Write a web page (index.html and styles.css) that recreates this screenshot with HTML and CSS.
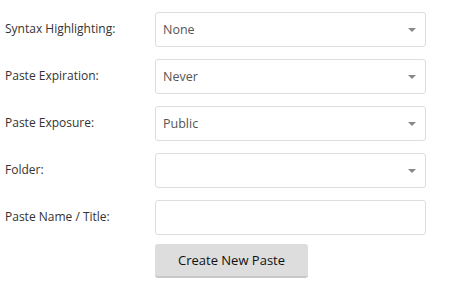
FILE: index.html
```html
<!DOCTYPE html>
<html lang="en">
<head>
    <meta charset="UTF-8">
    <title>New Paste</title>
    <link rel="stylesheet" href="styles.css">
</head>
<body>
    <form class="paste-form">
        <div class="form-row">
            <label class="form-label">Syntax Highlighting:</label>
            <div class="select-box"><span class="select-value">None</span><span class="arrow"></span></div>
        </div>
        <div class="form-row">
            <label class="form-label">Paste Expiration:</label>
            <div class="select-box"><span class="select-value">Never</span><span class="arrow"></span></div>
        </div>
        <div class="form-row">
            <label class="form-label">Paste Exposure:</label>
            <div class="select-box"><span class="select-value">Public</span><span class="arrow"></span></div>
        </div>
        <div class="form-row">
            <label class="form-label">Folder:</label>
            <div class="select-box"><span class="select-value"></span><span class="arrow"></span></div>
        </div>
        <div class="form-row">
            <label class="form-label">Paste Name / Title:</label>
            <input type="text" class="text-input">
        </div>
        <div class="form-actions">
            <button type="button" class="submit-btn">Create New Paste</button>
        </div>
    </form>
</body>
</html>
```
FILE: styles.css
```css
body {
    font-family: 'Open Sans', 'Segoe UI', sans-serif;
    font-size: 12px;
    margin: 0;
    padding: 12px 0 0 5px;
    background-color: #fff;
    color: #333;
}

.form-row {
    display: flex;
    align-items: center;
    margin-bottom: 12px;
}

.form-label {
    width: 150px;
    padding-bottom: 2px;
}

.select-box,
.text-input {
    width: 271px;
    height: 35px;
    box-sizing: border-box;
    border: 1px solid #ddd;
    border-radius: 3px;
    background-color: #fff;
}

.select-box {
    display: flex;
    align-items: center;
    justify-content: space-between;
    padding: 0 9px 0 7px;
    color: #555;
    font-size: 12.5px;
}

.arrow {
    width: 0;
    height: 0;
    border-left: 4px solid transparent;
    border-right: 4px solid transparent;
    border-top: 4px solid #888;
}

.text-input {
    margin: 0;
    font: inherit;
}

.form-actions {
    padding-left: 150px;
    margin-top: -3px;
}

.submit-btn {
    width: 153px;
    height: 34px;
    background-color: #ddd;
    border: none;
    border-bottom: 2px solid #c8c8c8;
    border-radius: 3px;
    font-family: inherit;
    font-size: 13px;
    font-weight: 500;
    color: #111;
    padding: 0;
}
```
